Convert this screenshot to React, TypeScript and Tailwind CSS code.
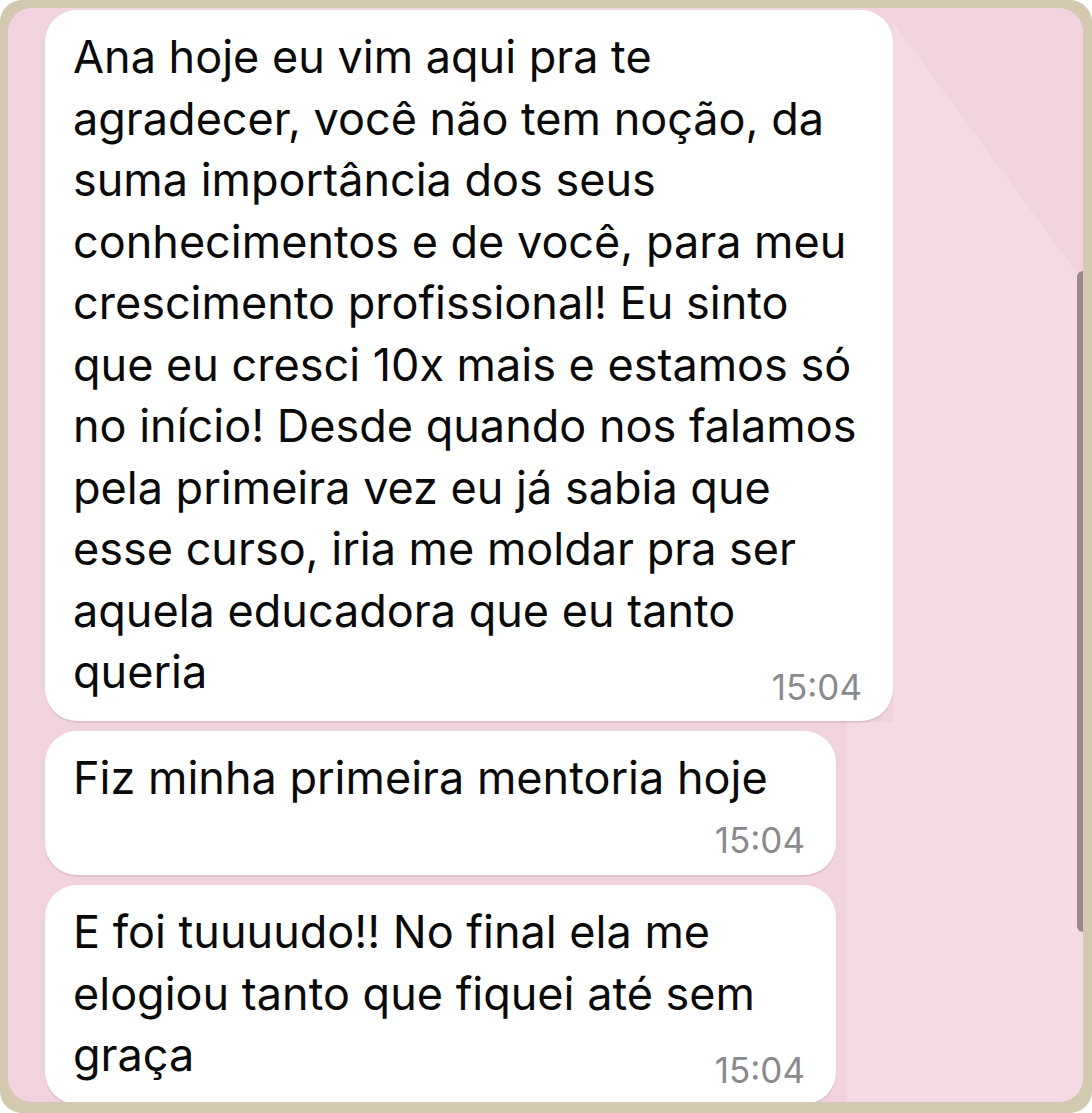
import React from 'react';

type Message = {
  lines: string[];
  time: string;
  width: string;
  timeOwnRow?: boolean;
};

const messages: Message[] = [
  {
    lines: [
      'Ana hoje eu vim aqui pra te',
      'agradecer, você não tem noção, da',
      'suma importância dos seus',
      'conhecimentos e de você, para meu',
      'crescimento profissional! Eu sinto',
      'que eu cresci 10x mais e estamos só',
      'no início! Desde quando nos falamos',
      'pela primeira vez eu já sabia que',
      'esse curso, iria me moldar pra ser',
      'aquela educadora que eu tanto',
      'queria',
    ],
    time: '15:04',
    width: 'w-[848px]',
  },
  {
    lines: ['Fiz minha primeira mentoria hoje'],
    time: '15:04',
    width: 'w-[791px]',
    timeOwnRow: true,
  },
  {
    lines: ['E foi tuuuudo!! No final ela me', 'elogiou tanto que fiquei até sem', 'graça'],
    time: '15:04',
    width: 'w-[791px]',
  },
];

const Bubble: React.FC<{ msg: Message }> = ({ msg }) => {
  const body = msg.timeOwnRow ? msg.lines : msg.lines.slice(0, -1);
  const last = msg.lines[msg.lines.length - 1];

  return (
    <div
      className={`${msg.width} shrink-0 rounded-[32px] bg-white pl-[28px] pr-[31px] pt-[16px] pb-[18px] shadow-[0_2px_1px_rgba(150,100,120,0.18)]`}
    >
      <div className="text-[45px] leading-[61.5px] text-[#0a0a0a]">
        {body.map((line) => (
          <div key={line}>{line}</div>
        ))}
        {msg.timeOwnRow ? (
          <div className="flex justify-end">
            <span className="mt-[15px] text-[35px] leading-[34px] text-[#8a8a8e]">{msg.time}</span>
          </div>
        ) : (
          <div className="flex items-end justify-between">
            <span>{last}</span>
            <span className="mb-[-1px] text-[35px] leading-[34px] text-[#8a8a8e]">{msg.time}</span>
          </div>
        )}
      </div>
    </div>
  );
};

const App: React.FC = () => {
  return (
    <div
      className="w-[1092px] h-[1113px] bg-[#d3c8b0] rounded-[22px] pt-[8px] pl-[8px] pr-[9px] pb-[11px]"
      style={{ fontFamily: 'Inter, "Liberation Sans", sans-serif' }}
    >
      <div className="relative h-full w-full overflow-hidden rounded-[24px] bg-[#f1d3df]">
        {/* dithered light wedge on the right */}
        <svg className="absolute inset-0 h-full w-full" viewBox="0 0 1075 1094" preserveAspectRatio="none">
          <polygon
            points="885,14 1068,264 1075,264 1075,1094 839,1094 839,714 885,714"
            fill="#f3dae4"
          />
        </svg>

        <div className="relative flex flex-col gap-[10px] pl-[37px] pt-[2px]">
          {messages.map((m, i) => (
            <Bubble key={i} msg={m} />
          ))}
        </div>

        {/* scrollbar */}
        <div className="absolute right-0 top-[263px] h-[661px] w-[6px] rounded-l-full bg-[#9c858f]" />
      </div>
    </div>
  );
};

export default App;
